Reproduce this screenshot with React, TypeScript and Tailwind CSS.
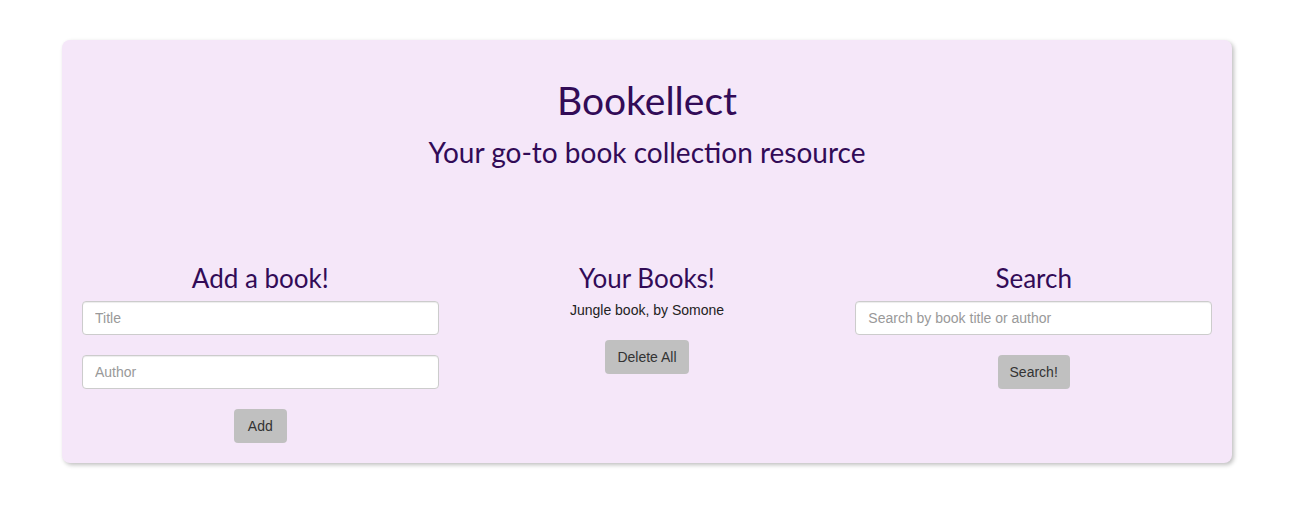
export default function App() {
  const heading = "font-['Lato',sans-serif] text-[#320b57]";
  const input =
    "h-[34px] w-full rounded-[4px] border border-[#ccc] bg-white px-3 text-[14px] text-[#555] placeholder:text-[#999] shadow-[inset_0_1px_1px_rgba(0,0,0,0.075)] outline-none";
  const button =
    "h-[34px] rounded-[4px] bg-[#c0c0c0] px-3 text-[14px] text-[#333]";

  return (
    <div className="min-h-[529px] bg-white pt-[40px] font-['Liberation_Sans',Arial,sans-serif]">
      <div className="ml-[62px] h-[423px] w-[1170px] rounded-[8px] bg-[#f5e7f9] px-[20px] pt-[39px] shadow-[2px_2px_4px_rgba(0,0,0,0.25)]">
        <header className="text-center">
          <h1 className={`${heading} text-[39px] leading-[42px]`}>Bookellect</h1>
          <h2 className={`${heading} mt-[16px] text-[28px] leading-[31px]`}>
            Your go-to book collection resource
          </h2>
        </header>

        <div className="mt-[96px] grid grid-cols-3 gap-x-[30px]">
          <section className="flex flex-col items-center">
            <h3 className={`${heading} mb-[9px] text-[26px] leading-[28px]`}>Add a book!</h3>
            <input className={input} placeholder="Title" />
            <input className={`${input} mt-[20px]`} placeholder="Author" />
            <button className={`${button} mt-[20px] px-[14px]`}>Add</button>
          </section>

          <section className="flex flex-col items-center">
            <h3 className={`${heading} mb-[9px] text-[26px] leading-[28px]`}>Your Books!</h3>
            <p className="text-[14px] leading-[18px] text-[#222]">Jungle book, by Somone</p>
            <button className={`${button} mt-[21px]`}>Delete All</button>
          </section>

          <section className="flex flex-col items-center">
            <h3 className={`${heading} mb-[9px] text-[26px] leading-[28px]`}>Search</h3>
            <input className={input} placeholder="Search by book title or author" />
            <button className={`${button} mt-[20px]`}>Search!</button>
          </section>
        </div>
      </div>
    </div>
  );
}
